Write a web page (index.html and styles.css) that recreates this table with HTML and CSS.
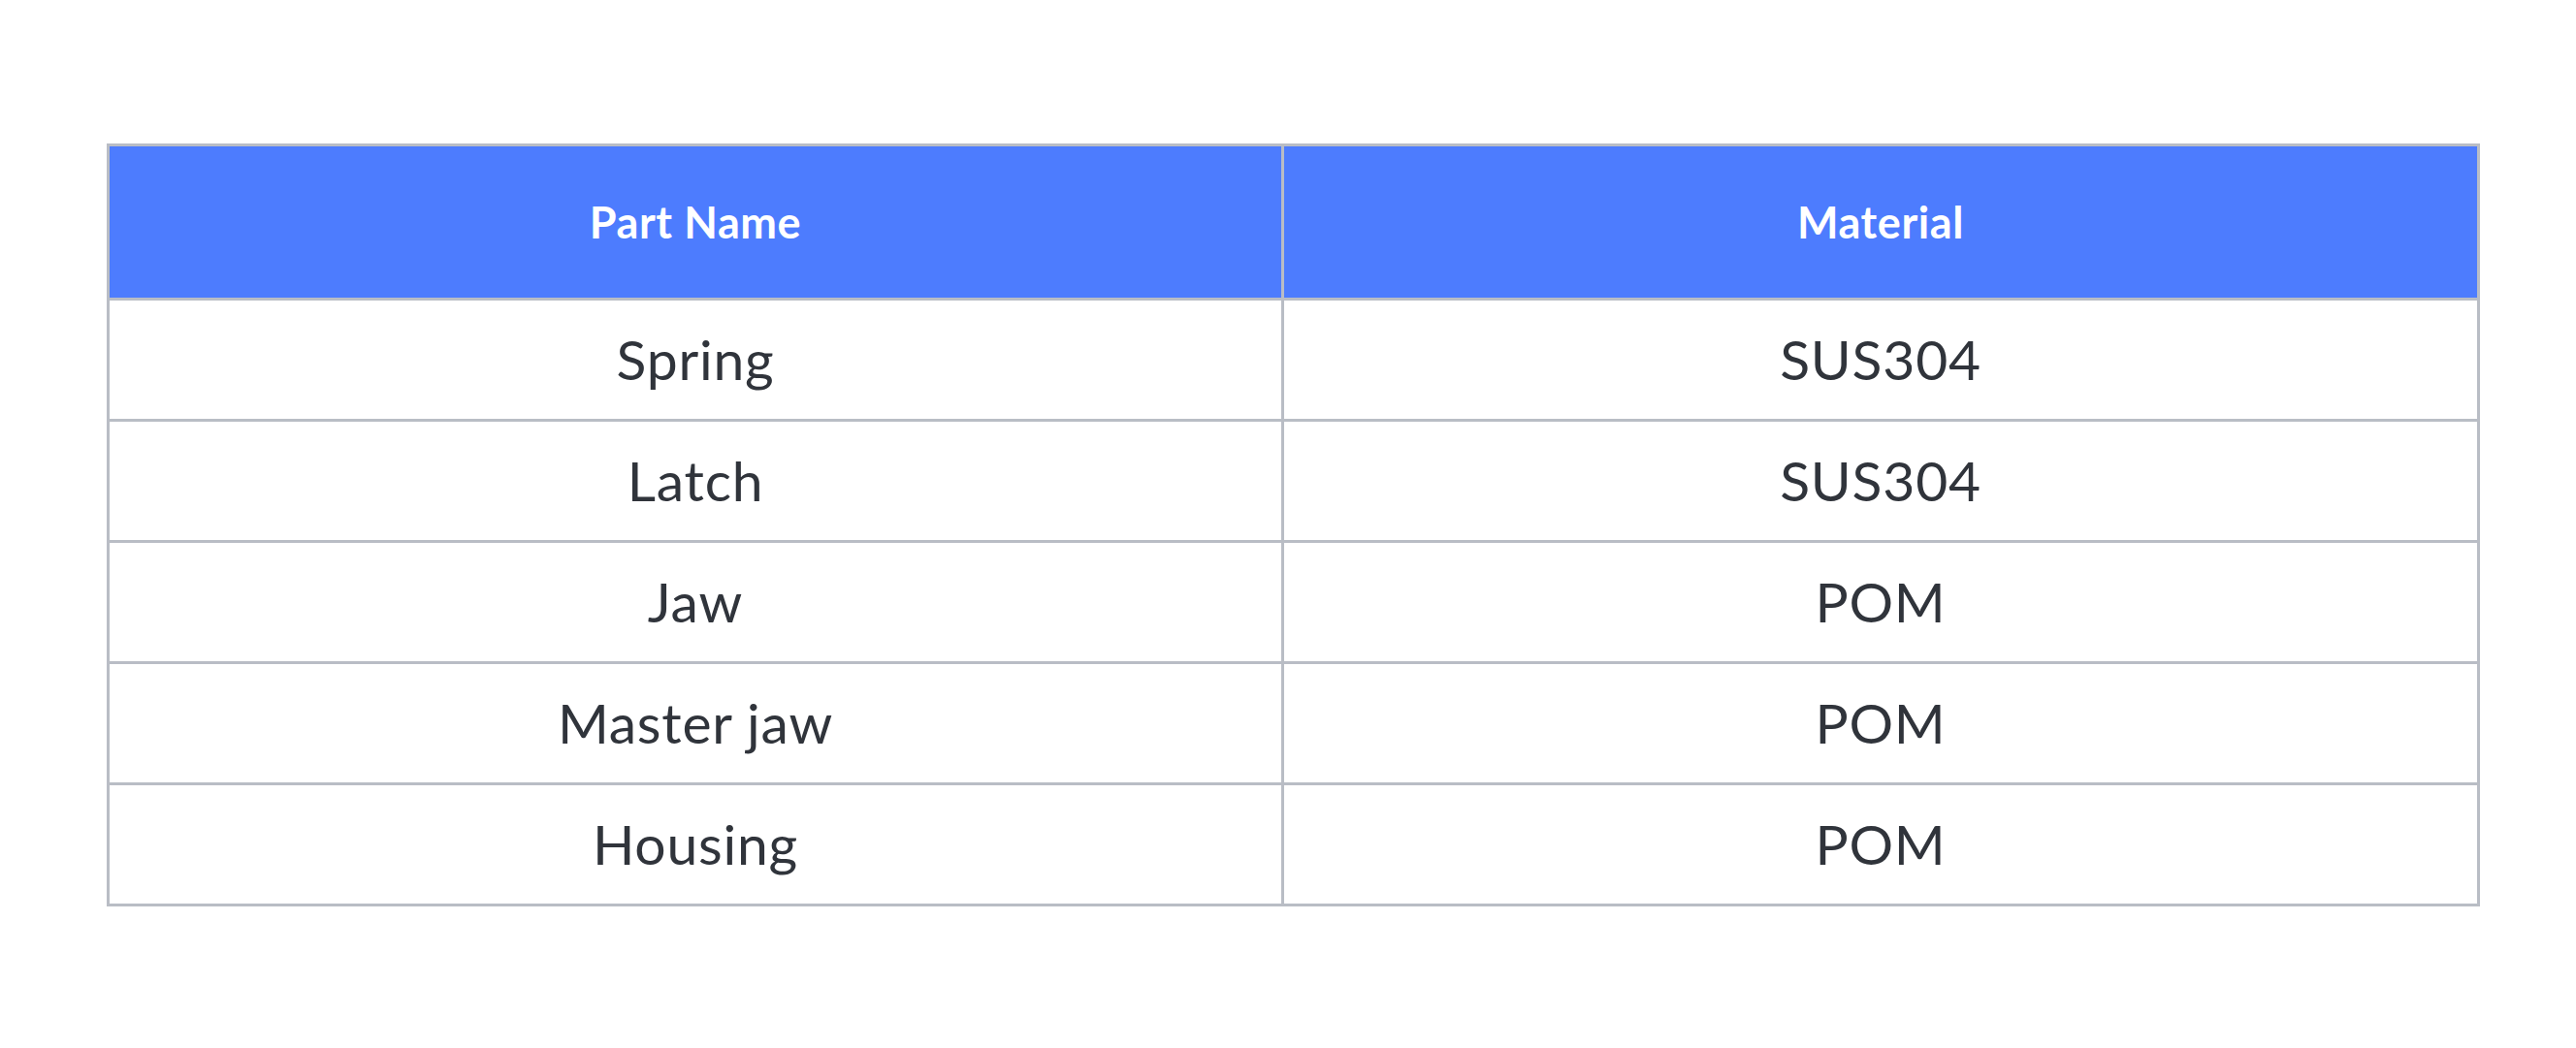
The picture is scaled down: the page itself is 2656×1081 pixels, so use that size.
FILE: index.html
```html
<!DOCTYPE html>
<html>
<head>
<meta charset="utf-8">
<link rel="stylesheet" href="styles.css">
</head>
<body>
<div class="page">
  <table class="parts">
    <colgroup><col class="c1"><col class="c2"></colgroup>
    <thead>
      <tr><th>Part Name</th><th>Material</th></tr>
    </thead>
    <tbody>
      <tr><td>Spring</td><td>SUS304</td></tr>
      <tr><td>Latch</td><td>SUS304</td></tr>
      <tr><td>Jaw</td><td>POM</td></tr>
      <tr><td>Master jaw</td><td>POM</td></tr>
      <tr><td>Housing</td><td>POM</td></tr>
    </tbody>
  </table>
</div>
</body>
</html>
```
FILE: styles.css
```css
html, body {
  margin: 0;
  padding: 0;
  background: #ffffff;
}
.page {
  padding: 148px 0 0 110px;
}
.parts {
  border-collapse: collapse;
  width: 2447px;
  table-layout: fixed;
  font-family: "Lato", "Noto Sans", sans-serif;
}
.c1 { width: 1211px; }
.parts th, .parts td {
  border: 3px solid #b9bdc5;
  text-align: center;
  padding: 0;
}
.parts th {
  background: #4d7cfe;
  color: #ffffff;
  font-weight: 700;
  font-size: 45px;
  letter-spacing: 0.6px;
  height: 156px;
}
.parts td {
  color: #30343b;
  font-size: 57px;
  letter-spacing: 0.8px;
  height: 119px;
  padding-bottom: 3px;
}
```
